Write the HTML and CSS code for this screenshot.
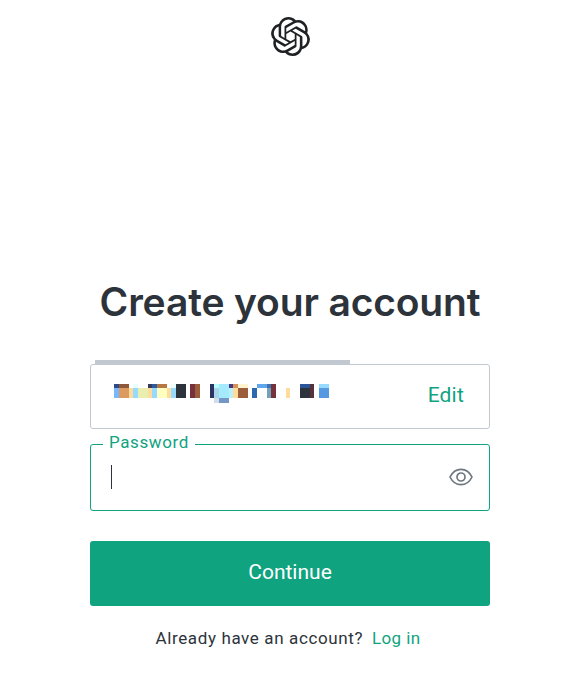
FILE: index.html
```html
<!DOCTYPE html>
<html lang="en">
<head>
  <meta charset="UTF-8">
  <title>Create your account</title>
  <link rel="stylesheet" href="styles.css">
</head>
<body>
  <header class="header">
    <svg class="logo" viewBox="0 0 24 24" fill="#202123"><path d="M22.2819 9.8211a5.9847 5.9847 0 0 0-.5157-4.9108 6.0462 6.0462 0 0 0-6.5098-2.9A6.0651 6.0651 0 0 0 4.9807 4.1818a5.9847 5.9847 0 0 0-3.9977 2.9 6.0462 6.0462 0 0 0 .7427 7.0966 5.98 5.98 0 0 0 .511 4.9107 6.051 6.051 0 0 0 6.5146 2.9001A5.9847 5.9847 0 0 0 13.2599 24a6.0557 6.0557 0 0 0 5.7718-4.2058 5.9894 5.9894 0 0 0 3.9977-2.9001 6.0557 6.0557 0 0 0-.7475-7.0729zm-9.022 12.6081a4.4755 4.4755 0 0 1-2.8764-1.0408l.1419-.0804 4.7783-2.7582a.7948.7948 0 0 0 .3927-.6813v-6.7369l2.02 1.1686a.071.071 0 0 1 .038.052v5.5826a4.504 4.504 0 0 1-4.4945 4.4944zm-9.6607-4.1254a4.4708 4.4708 0 0 1-.5346-3.0137l.142.0852 4.783 2.7582a.7712.7712 0 0 0 .7806 0l5.8428-3.3685v2.3324a.0804.0804 0 0 1-.0332.0615L9.74 19.9502a4.4992 4.4992 0 0 1-6.1408-1.6464zM2.3408 7.8956a4.485 4.485 0 0 1 2.3655-1.9728V11.6a.7664.7664 0 0 0 .3879.6765l5.8144 3.3543-2.0201 1.1685a.0757.0757 0 0 1-.071 0l-4.8303-2.7865A4.504 4.504 0 0 1 2.3408 7.872zm16.5963 3.8558L13.1038 8.364 15.1192 7.2a.0757.0757 0 0 1 .071 0l4.8303 2.7913a4.4944 4.4944 0 0 1-.6765 8.1042v-5.6772a.79.79 0 0 0-.407-.667zm2.0107-3.0231l-.142-.0852-4.7735-2.7818a.7759.7759 0 0 0-.7854 0L9.409 9.2297V6.8974a.0662.0662 0 0 1 .0284-.0615l4.8303-2.7866a4.4992 4.4992 0 0 1 6.6802 4.66zM8.3065 12.863l-2.02-1.1638a.0804.0804 0 0 1-.038-.0567V6.0742a4.4992 4.4992 0 0 1 7.3757-3.4537l-.142.0805L8.704 5.459a.7948.7948 0 0 0-.3927.6813zm1.0976-2.3654l2.602-1.4998 2.6069 1.4998v2.9994l-2.5974 1.4997-2.6067-1.4997Z"/></svg>
  </header>

  <main class="main">
    <h1 class="title">Create your account</h1>

    <div class="strip"></div>
    <div class="email">
      <!-- Censored address -->
      <svg class="address" width="216" height="19" viewBox="114 384 216 19" shape-rendering="crispEdges">
        <path fill="#2b4a86" d="M114 384h5v4h-5z"/>
        <path fill="#8f5638" d="M119 384h10v4h-10z"/>
        <path fill="#e9ffff" d="M133 384h5v4h-5zM171 384h5v4h-5z"/>
        <path fill="#383a5c" d="M148 384h4v4h-4z"/>
        <path fill="#2b5ca0" d="M152 384h5v4h-5z"/>
        <path fill="#b67743" d="M157 384h10v4h-10z"/>
        <path fill="#75b8ff" d="M114 388h5v10h-5z"/>
        <path fill="#dc9a5f" d="M119 388h10v10h-10z"/>
        <path fill="#ffdc9b" d="M129 388h4v10h-4zM148 388h4v10h-4zM167 388h4v10h-4zM233 388h5v10h-5zM286 388h4v10h-4z"/>
        <path fill="#96daff" d="M133 388h5v10h-5zM152 388h5v10h-5zM171 388h5v10h-5zM319 384h10v4h-10z"/>
        <path fill="#e9efb0" d="M138 388h10v10h-10z"/>
        <path fill="#ffffc0" d="M157 388h10v10h-10z"/>
        <path fill="#2d333a" d="M176 384h10v14h-10zM300 388h10v10h-10z"/>
        <path fill="#75323c" d="M190 384h5v14h-5zM271 384h5v14h-5z"/>
        <path fill="#9b5d3a" d="M195 384h5v14h-5zM238 388h10v10h-10z"/>
        <path fill="#2c3363" d="M210 384h4v14h-4z"/>
        <path fill="#b9ffff" d="M214 384h5v4h-5z"/>
        <path fill="#a9d5ea" d="M214 388h5v10h-5z"/>
        <path fill="#cfdeea" d="M214 398h5v5h-5z"/>
        <path fill="#a5ebff" d="M219 384h10v14h-10z"/>
        <path fill="#7497c7" d="M219 398h10v5h-10z"/>
        <path fill="#4b3885" d="M229 384h4v4h-4z"/>
        <path fill="#b8f0ff" d="M229 388h4v10h-4z"/>
        <path fill="#d4935a" d="M233 384h5v4h-5z"/>
        <path fill="#fff4cf" d="M238 384h10v4h-10z"/>
        <path fill="#2b68b0" d="M252 388h5v10h-5z"/>
        <path fill="#5fa6ea" d="M257 384h10v4h-10z"/>
        <path fill="#3b74b5" d="M267 384h4v4h-4z"/>
        <path fill="#75a0b8" d="M267 388h4v10h-4z"/>
        <path fill="#2b5598" d="M300 384h10v4h-10z"/>
        <path fill="#56323c" d="M310 384h4v14h-4z"/>
        <path fill="#559ae0" d="M319 388h10v10h-10z"/>
      </svg>
      <a class="edit">Edit</a>
    </div>

    <div class="password">
      <label class="label">Password</label>
      <span class="caret"></span>
      <svg class="eye" width="24" height="18" viewBox="0 0 24 18" fill="none" stroke="#6e7780" stroke-width="1.7">
        <path d="M1 9C3.3 4.300 7.200 1.300 12 1.300S20.700 4.300 23 9C20.700 13.700 16.800 16.700 12 16.700S3.300 13.700 1 9z" stroke-linejoin="round"/>
        <circle cx="12" cy="9" r="4"/>
      </svg>
    </div>

    <button class="continue">Continue</button>
    <p class="login">Already have an account? <a class="link">Log in</a></p>
  </main>
</body>
</html>
```

FILE: styles.css
```css
* {
  box-sizing: border-box;
}
body {
  margin: 0;
  background: #fff;
  color: #2d333a;
  font-family: Roboto, Arial, sans-serif;
}
.header {
  height: 279px;
  padding-top: 17px;
  padding-left: 10px;
  text-align: center;
}
.logo {
  width: 39px;
  height: 39px;
}
.main {
  display: flex;
  flex-direction: column;
  width: 400px;
  margin: 0 auto 0 90px;
}
.title {
  height: 81px;
  margin: 0;
  font-family: Inter, sans-serif;
  font-size: 39px;
  font-weight: 600;
  line-height: 45px;
  letter-spacing: -0.15px;
  text-align: center;
  white-space: nowrap;
}
.strip {
  width: 255px;
  height: 4px;
  margin-left: 5px;
  background: #c2c8d0;
}
.email {
  display: flex;
  justify-content: space-between;
  height: 65px;
  padding: 19px 25px 0 23px;
  border: 1px solid #c2c8d0;
  border-radius: 3px;
}
.edit {
  margin-top: -1px;
  color: #10a37f;
  font-size: 21px;
  line-height: 24px;
  letter-spacing: 0.2px;
}
.password {
  position: relative;
  display: flex;
  justify-content: space-between;
  align-items: center;
  height: 67px;
  margin-top: 15px;
  padding: 0 16px 2px 20px;
  border: 1px solid #10a37f;
  border-radius: 3px;
}
.label {
  position: absolute;
  top: -13px;
  left: 12px;
  padding: 0 6px;
  background: #fff;
  color: #10a37f;
  font-size: 17px;
  line-height: 20px;
  letter-spacing: 0.6px;
}
.caret {
  width: 1px;
  height: 24px;
  background: #2d333a;
}
.continue {
  height: 65px;
  margin-top: 30px;
  padding: 0 0 3px;
  border: 0;
  border-radius: 3px;
  background: #10a37f;
  color: #fff;
  font-family: inherit;
  font-size: 21px;
}
.login {
  margin: 22px 0 0;
  padding-right: 4px;
  font-size: 17px;
  line-height: 20px;
  letter-spacing: 0.62px;
  text-align: center;
}
.link {
  margin-left: 4px;
  color: #10a37f;
  letter-spacing: 0.4px;
}
```
